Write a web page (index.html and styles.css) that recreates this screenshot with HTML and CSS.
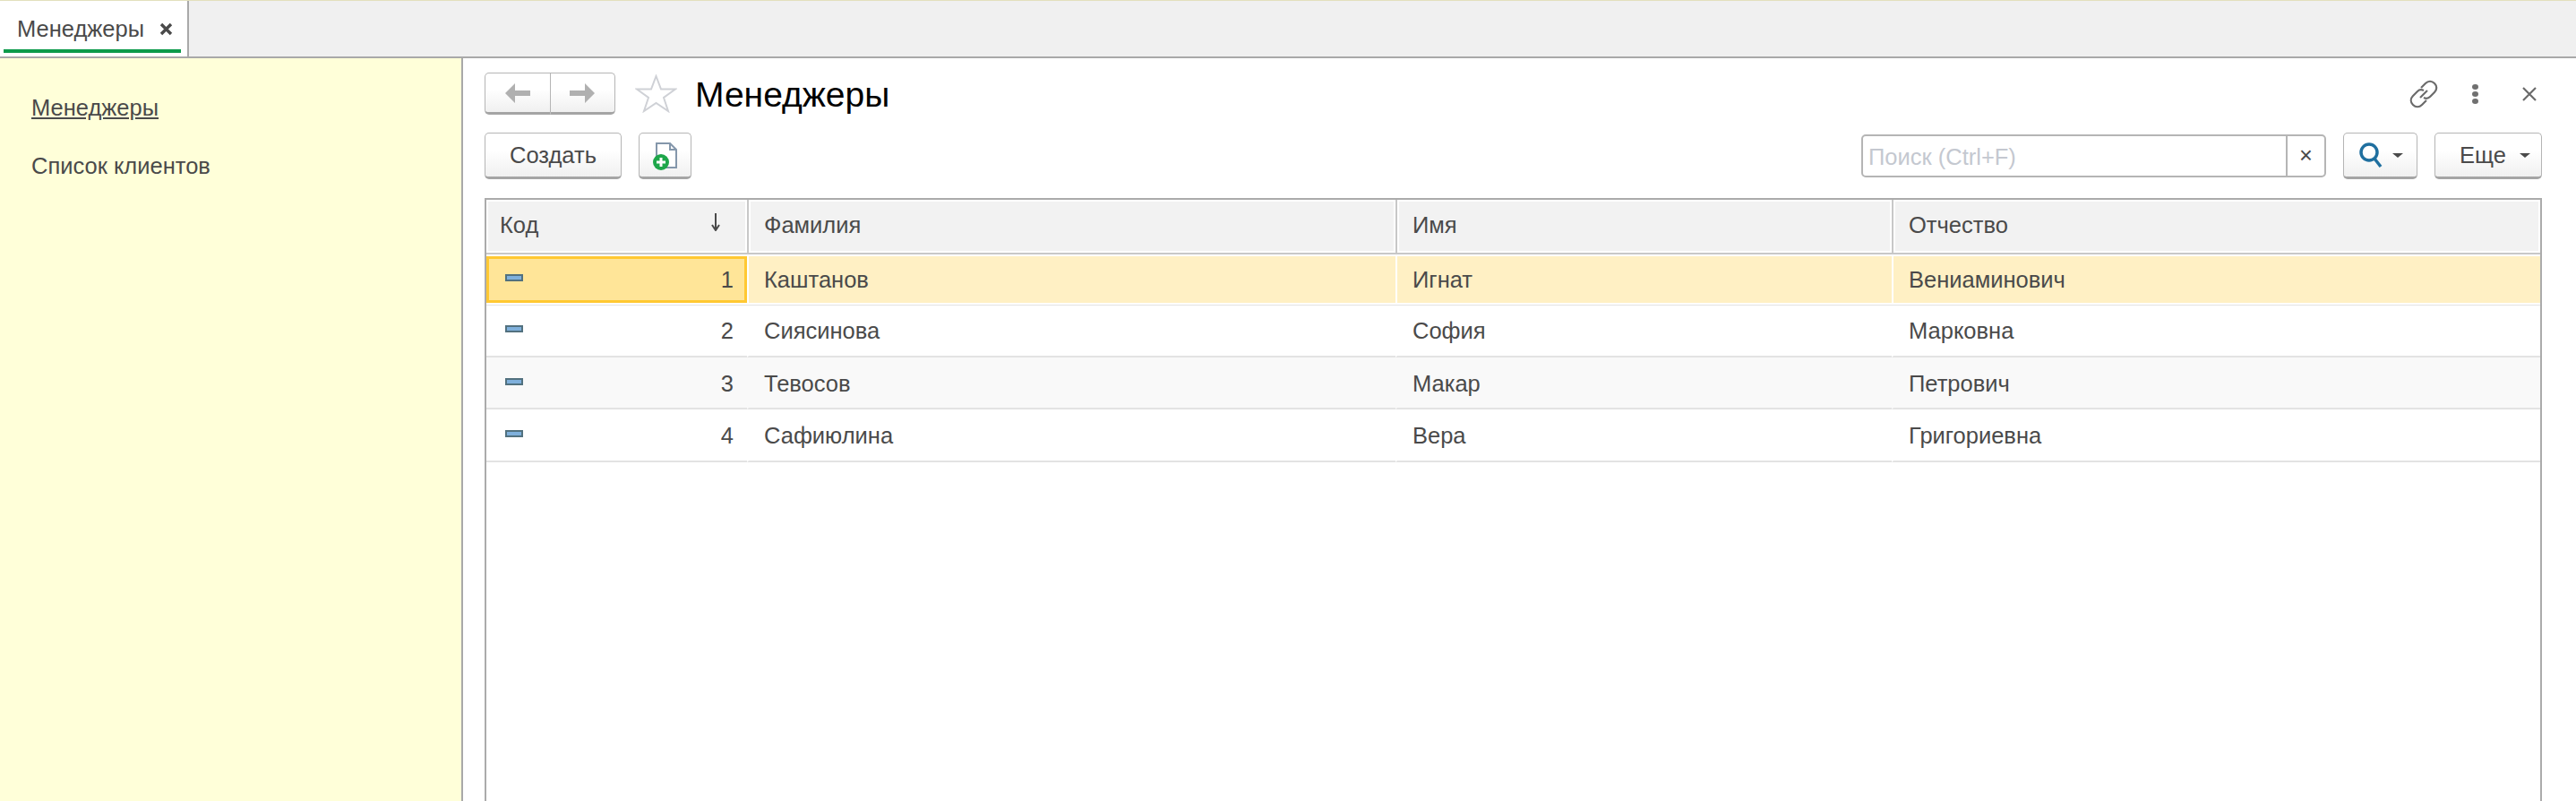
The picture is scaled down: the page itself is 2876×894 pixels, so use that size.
FILE: index.html
```html
<!DOCTYPE html>
<html lang="ru">

<head>
    <meta charset="UTF-8" />
    <title>Менеджеры</title>
    <link rel="stylesheet" href="styles.css">
</head>

<body>
    <div class="tabbar">
        <div class="tab">
            <span class="tab-title">Менеджеры</span>
            <svg class="tab-close" width="15" height="15" viewBox="0 0 15 15">
                <path d="M2 2 L13 13 M13 2 L2 13" />
            </svg>
        </div>
    </div>

    <div class="workspace">
        <nav class="sidebar">
            <a class="side-link current">Менеджеры</a>
            <a class="side-link">Список клиентов</a>
        </nav>

        <main class="content">
            <div class="title-row">
                <div class="nav-group">
                    <button class="btn nav-btn">
                        <svg width="28" height="22" viewBox="0 0 28 22">
                            <path d="M0 11 L11 0 V8 H28 V14 H11 V22 Z" />
                        </svg>
                    </button>
                    <button class="btn nav-btn">
                        <svg width="28" height="22" viewBox="0 0 28 22">
                            <path d="M28 11 L17 0 V8 H0 V14 H17 V22 Z" />
                        </svg>
                    </button>
                </div>
                <svg class="star" width="47" height="43" viewBox="0 0 47 43">
                    <path d="M23.5 2 L29 16.5 L45 16.5 L32 26 L37 41 L23.5 32 L10 41 L15 26 L2 16.5 L18 16.5 Z" />
                </svg>
                <h1>Менеджеры</h1>
                <div class="window-tools">
                    <svg class="link-icon" width="32" height="32" viewBox="0 0 32 32">
                        <path d="M13 9 L18 4 C21 1 25 1 28 4 C31 7 31 11 28 14 L23 19 C21 21 18 21 16 20" />
                        <path d="M19 23 L14 28 C11 31 7 31 4 28 C1 25 1 21 4 18 L9 13 C11 11 14 11 16 12" />
                        <path d="M12 20 L20 12" />
                    </svg>
                    <div class="dots"><i></i><i></i><i></i></div>
                    <svg class="win-close" width="16" height="16" viewBox="0 0 16 16">
                        <path d="M1 1 L15 15 M15 1 L1 15" />
                    </svg>
                </div>
            </div>

            <div class="toolbar">
                <button class="btn create-btn">Создать</button>
                <button class="btn icon-btn">
                    <svg width="30" height="34" viewBox="0 0 30 34">
                        <path class="doc" d="M5 4 H20 L27 11 V31 H5 Z M20 4 V11 H27" />
                        <circle class="plus-bg" cx="10" cy="25" r="9" />
                        <path class="plus" d="M10 20 V30 M5 25 H15" />
                    </svg>
                </button>
                <div class="search">
                    <span class="search-input">Поиск (Ctrl+F)</span>
                    <span class="search-clear">×</span>
                </div>
                <button class="btn find-btn">
                    <svg width="28" height="30" viewBox="0 0 28 30">
                        <circle cx="12" cy="12" r="9" />
                        <path d="M18 19 L25 28" />
                    </svg>
                    <span class="caret"></span>
                </button>
                <button class="btn more-btn">Еще<span class="caret"></span></button>
            </div>

            <div class="list">
                <table>
                    <thead>
                        <tr>
                            <th class="col-code">Код
                                <svg class="sort-arrow" width="10" height="20" viewBox="0 0 10 20">
                                    <path d="M5 0 V18 M1 13 L5 19 L9 13" />
                                </svg>
                            </th>
                            <th class="col-last">Фамилия</th>
                            <th class="col-first">Имя</th>
                            <th>Отчество</th>
                        </tr>
                    </thead>
                    <tbody>
                        <tr class="selected">
                            <td class="code current-cell"><span class="row-icon"></span>1</td>
                            <td>Каштанов</td>
                            <td>Игнат</td>
                            <td>Вениаминович</td>
                        </tr>
                        <tr>
                            <td class="code"><span class="row-icon"></span>2</td>
                            <td>Сиясинова</td>
                            <td>София</td>
                            <td>Марковна</td>
                        </tr>
                        <tr class="striped">
                            <td class="code"><span class="row-icon"></span>3</td>
                            <td>Тевосов</td>
                            <td>Макар</td>
                            <td>Петрович</td>
                        </tr>
                        <tr>
                            <td class="code"><span class="row-icon"></span>4</td>
                            <td>Сафиюлина</td>
                            <td>Вера</td>
                            <td>Григориевна</td>
                        </tr>
                    </tbody>
                </table>
            </div>
        </main>
    </div>
</body>

</html>
```

FILE: styles.css
```css
html,
body {
    overflow: hidden;
}

body {
    margin: 0;
    height: 100vh;
    display: flex;
    flex-direction: column;
    font-family: "Liberation Sans", Arial, sans-serif;
    font-size: 25.5px;
    color: #4a4a4a;
    background-color: white;
}

/* top tabs */
.tabbar {
    height: 62px;
    flex: none;
    display: flex;
    background-color: #f0f0f0;
    border-top: 1px solid #e3e0bd;
    border-bottom: 2px solid #a9a9a9;
}

.tab {
    width: 211px;
    padding-left: 19px;
    box-sizing: border-box;
    display: flex;
    align-items: center;
    gap: 17px;
    background-color: white;
    border-right: 2px solid #a9a9a9;
    position: relative;
}

.tab::after {
    content: "";
    position: absolute;
    left: 4px;
    right: 7px;
    bottom: 4px;
    height: 4px;
    background-color: #0c9a4a;
}

.tab-close {
    fill: none;
    stroke: #4a4a4a;
    stroke-width: 3.4;
}

.workspace {
    flex: 1;
    display: flex;
    min-height: 0;
}

/* left panel */
.sidebar {
    width: 517px;
    flex: none;
    padding: 42px 0 0 35px;
    box-sizing: border-box;
    display: flex;
    flex-direction: column;
    gap: 38px;
    background-color: #ffffd9;
    border-right: 2px solid #a9a9a9;
}

.side-link {
    line-height: 27px;
}

.side-link.current {
    text-decoration: underline;
}

.content {
    flex: 1;
    min-width: 0;
    padding: 13px 38px 0 24px;
    display: flex;
    flex-direction: column;
}

.title-row {
    height: 53px;
    display: flex;
    align-items: center;
}

.btn {
    font: inherit;
    color: #4a4a4a;
    padding: 0;
    background: linear-gradient(#ffffff 40%, #f0f0f0);
    border: 1px solid #b5b5b5;
    border-bottom: 3px solid #a5a5a5;
    border-radius: 5px;
    display: flex;
    align-items: center;
    justify-content: center;
    box-sizing: border-box;
}

.nav-group {
    display: flex;
    height: 47px;
    width: 146px;
}

.nav-btn {
    flex: 1;
    fill: #b0b0b0;
}

.nav-btn:first-child {
    border-radius: 5px 0 0 5px;
}

.nav-btn:last-child {
    border-left: none;
    border-radius: 0 5px 5px 0;
}

.star {
    margin-left: 22px;
    fill: none;
    stroke: #cfd1d6;
    stroke-width: 2;
}

h1 {
    margin: 0 0 0 20px;
    padding-top: 2px;
    font-size: 39px;
    font-weight: normal;
    color: #000;
}

.window-tools {
    margin-left: auto;
    display: flex;
    align-items: center;
    padding-right: 6px;
}

.link-icon,
.win-close {
    fill: none;
    stroke: #6b6b6b;
    stroke-width: 2.2;
}

.dots {
    margin-left: 38px;
    display: flex;
    flex-direction: column;
    gap: 2px;
}

.dots i {
    width: 7px;
    height: 6px;
    border-radius: 50%;
    background-color: #707070;
}

.win-close {
    margin-left: 49px;
}

/* commands */
.toolbar {
    margin-top: 17px;
    height: 52px;
    display: flex;
    align-items: center;
}

.create-btn {
    width: 153px;
    height: 52px;
}

.icon-btn {
    width: 59px;
    height: 52px;
    margin-left: 19px;
}

.doc {
    fill: white;
    stroke: #8497ab;
    stroke-width: 2;
}

.plus-bg {
    fill: #1ea64a;
}

.plus {
    fill: none;
    stroke: white;
    stroke-width: 3;
}

.search {
    margin-left: auto;
    width: 519px;
    height: 48px;
    box-sizing: border-box;
    display: flex;
    border: 2px solid #b5b5b5;
    border-radius: 5px;
}

.search-input {
    flex: 1;
    padding-left: 6px;
    line-height: 46px;
    color: #c4c8d0;
}

.search-clear {
    width: 41px;
    text-align: center;
    line-height: 42px;
    border-left: 2px solid #b5b5b5;
}

.find-btn {
    width: 83px;
    height: 52px;
    margin-left: 19px;
    gap: 10px;
    fill: none;
    stroke: #1f6f9f;
    stroke-width: 3.5;
}

.more-btn {
    width: 120px;
    height: 52px;
    margin-left: 19px;
    padding-left: 27px;
    justify-content: flex-start;
    gap: 15px;
}

.caret {
    width: 0;
    height: 0;
    border-left: 6px solid transparent;
    border-right: 6px solid transparent;
    border-top: 5px solid #4a4a4a;
}

/* list */
.list {
    margin-top: 21px;
    flex: 1;
    min-height: 0;
    border: 2px solid #ababab;
    border-bottom: none;
}

table {
    width: 100%;
    table-layout: fixed;
    border-collapse: separate;
    border-spacing: 0;
}

.col-code {
    width: 291px;
}

.col-last {
    width: 724px;
}

.col-first {
    width: 554px;
}

th {
    height: 61px;
    padding: 0 0 2px 17px;
    box-sizing: border-box;
    text-align: left;
    font-weight: normal;
    background-color: #f2f2f2;
    border-left: 2px solid #c8c8c8;
    border-bottom: 2px solid #c8c8c8;
    box-shadow: inset 0 0 0 2px white;
    position: relative;
}

th.col-code {
    padding-left: 15px;
    border-left: none;
}

.sort-arrow {
    position: absolute;
    right: 30px;
    top: 15px;
    fill: none;
    stroke: #4a4a4a;
    stroke-width: 2;
}

td {
    height: 58.5px;
    padding: 3px 0 0 17px;
    box-sizing: border-box;
    border-left: 2px solid transparent;
    border-bottom: 2px solid #e3e3e3;
}

td.code {
    padding: 3px 15px 0 0;
    border-left: none;
    text-align: right;
    position: relative;
}

.row-icon {
    position: absolute;
    left: 21px;
    top: 23px;
    width: 20px;
    height: 8px;
    box-sizing: border-box;
    background-color: #7fb0dc;
    border: 2px solid #52717f;
}

.selected td {
    height: 56px;
    padding-top: 0;
    background-color: #fff0c4;
    background-clip: padding-box;
    border-top: 2px solid white;
    border-left: 2px solid white;
    border-bottom: 2px solid white;
    box-shadow: 0 1px 0 #e3e3e3;
}

.selected td.current-cell {
    background-color: #ffe598;
    border-left: none;
    box-shadow: inset 0 0 0 3px #ffc832, 0 1px 0 #e3e3e3;
}

.selected .row-icon {
    top: 20px;
}

.striped td {
    background-color: #f9f9f9;
}
```
